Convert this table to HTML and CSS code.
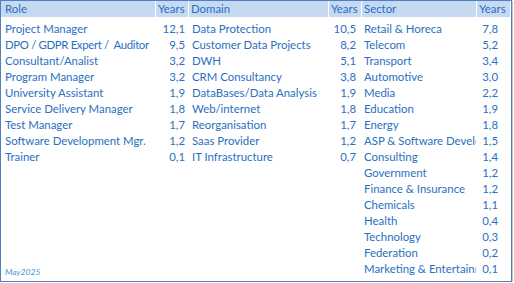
FILE: index.html
```html
<!DOCTYPE html>
<html>
<head>
<meta charset="utf-8">
<link rel="stylesheet" href="styles.css">
</head>
<body>
<div class="sheet">
  <div class="grid">
    <div class="h">Role</div><div class="h">Years</div><div class="h">Domain</div><div class="h">Years</div><div class="h">Sector</div><div class="h">Years</div>

    <div class="t">Project Manager</div><div class="n n1">12,1</div><div class="t">Data Protection</div><div class="n n2">10,5</div><div class="t s">Retail &amp; Horeca</div><div class="n n3">7,8</div>
    <div class="t tight">DPO / GDPR Expert /&nbsp; Auditor</div><div class="n n1">9,5</div><div class="t">Customer Data Projects</div><div class="n n2">8,2</div><div class="t s">Telecom</div><div class="n n3">5,2</div>
    <div class="t">Consultant/Analist</div><div class="n n1">3,2</div><div class="t">DWH</div><div class="n n2">5,1</div><div class="t s">Transport</div><div class="n n3">3,4</div>
    <div class="t">Program Manager</div><div class="n n1">3,2</div><div class="t">CRM Consultancy</div><div class="n n2">3,8</div><div class="t s">Automotive</div><div class="n n3">3,0</div>
    <div class="t">University Assistant</div><div class="n n1">1,9</div><div class="t">DataBases/Data Analysis</div><div class="n n2">1,9</div><div class="t s">Media</div><div class="n n3">2,2</div>
    <div class="t">Service Delivery Manager</div><div class="n n1">1,8</div><div class="t">Web/internet</div><div class="n n2">1,8</div><div class="t s">Education</div><div class="n n3">1,9</div>
    <div class="t">Test Manager</div><div class="n n1">1,7</div><div class="t">Reorganisation</div><div class="n n2">1,7</div><div class="t s">Energy</div><div class="n n3">1,8</div>
    <div class="t">Software Development Mgr.</div><div class="n n1">1,2</div><div class="t">Saas Provider</div><div class="n n2">1,2</div><div class="t s">ASP &amp; Software Development</div><div class="n n3">1,5</div>
    <div class="t">Trainer</div><div class="n n1">0,1</div><div class="t">IT Infrastructure</div><div class="n n2">0,7</div><div class="t s">Consulting</div><div class="n n3">1,4</div>
    <div class="t"></div><div class="n n1"></div><div class="t"></div><div class="n n2"></div><div class="t s">Government</div><div class="n n3">1,2</div>
    <div class="t"></div><div class="n n1"></div><div class="t"></div><div class="n n2"></div><div class="t s">Finance &amp; Insurance</div><div class="n n3">1,2</div>
    <div class="t"></div><div class="n n1"></div><div class="t"></div><div class="n n2"></div><div class="t s">Chemicals</div><div class="n n3">1,1</div>
    <div class="t"></div><div class="n n1"></div><div class="t"></div><div class="n n2"></div><div class="t s">Health</div><div class="n n3">0,4</div>
    <div class="t"></div><div class="n n1"></div><div class="t"></div><div class="n n2"></div><div class="t s">Technology</div><div class="n n3">0,3</div>
    <div class="t"></div><div class="n n1"></div><div class="t"></div><div class="n n2"></div><div class="t s">Federation</div><div class="n n3">0,2</div>
    <div class="t date">May2025</div><div class="n n1"></div><div class="t"></div><div class="n n2"></div><div class="t s">Marketing &amp; Entertainment</div><div class="n n3">0,1</div>
  </div>
</div>
</body>
</html>
```

FILE: styles.css
```css
html, body {
  margin: 0;
  padding: 0;
  background: #ffffff;
}

.sheet {
  width: 510px;
  height: 280px;
  border: 1px solid #4f7fc4;
  box-shadow: 1px 1px 0 #c8c8c8;
  background: #ffffff;
  font-family: Lato, "Liberation Sans", sans-serif;
  font-size: 11.4px;
  color: #2a6fc0;
}

.grid {
  display: grid;
  grid-template-columns: 154px 32px 139px 32px 114px 33px;
  grid-template-rows: 20px;
  grid-auto-rows: 16px;
  column-gap: 1px;
}

.grid > div {
  line-height: 16px;
  height: 16px;
  white-space: nowrap;
  overflow: hidden;
}

.h {
  background: #c5d9f1;
  padding-left: 2px;
  line-height: 17px;
  align-self: start;
}

.grid > .h:first-child {
  padding-left: 4px;
}

.t {
  padding-left: 3px;
}

.grid > div:nth-child(6n+1) {
  padding-left: 4px;
}

.grid > .tight {
  letter-spacing: -0.35px;
}

.s {
  padding-left: 2px;
}

.n {
  text-align: right;
}

.n1 { padding-right: 3px; }
.n2 { padding-right: 5px; }
.n3 { padding-right: 12px; }

.grid > .date {
  font-style: italic;
  font-size: 8.5px;
  color: #4a90d9;
  line-height: 23px;
}
```
